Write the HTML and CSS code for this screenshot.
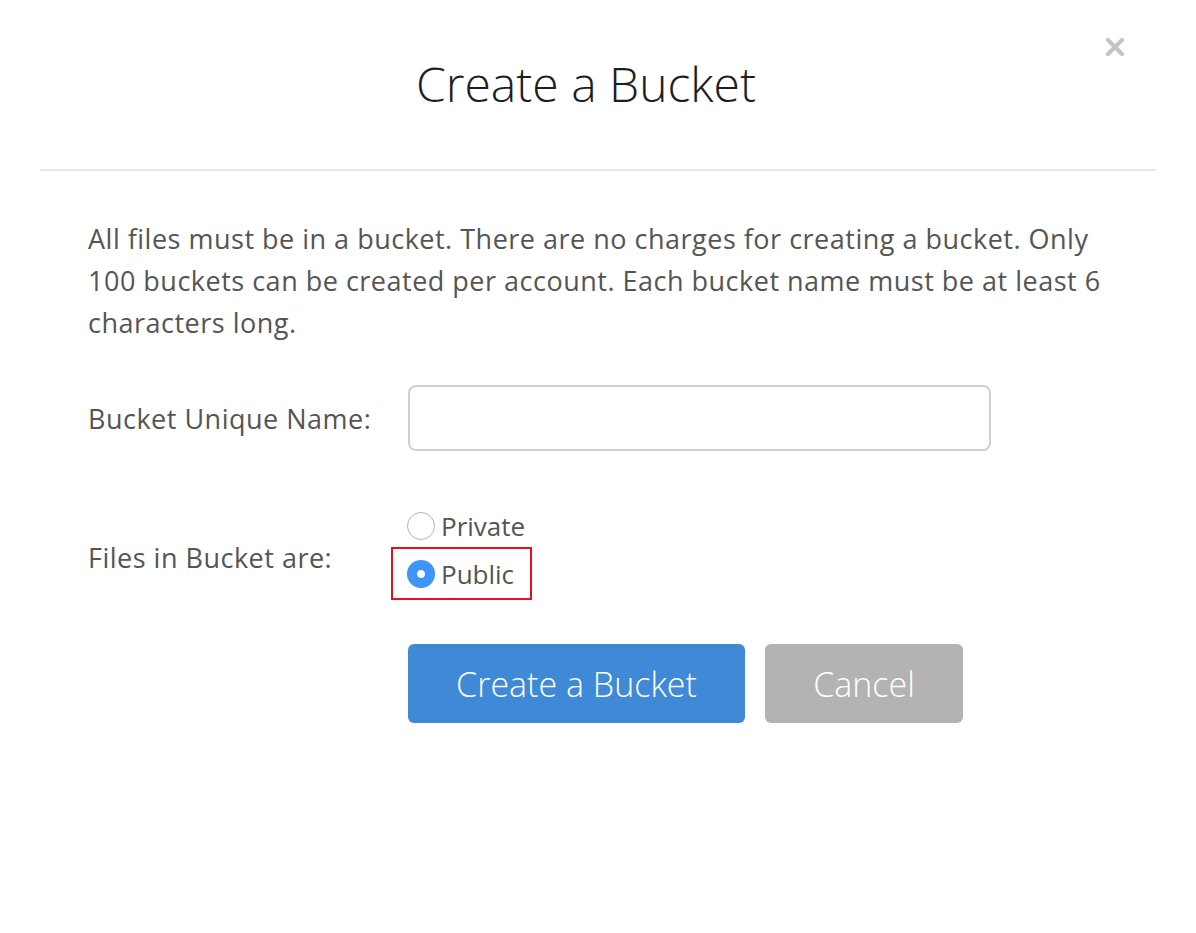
FILE: index.html
```html
<!DOCTYPE html>
<html>
<head>
<meta charset="utf-8">
<link rel="stylesheet" href="styles.css">
</head>
<body>
<div class="modal">
  <div class="modal-header">
    <h1 class="title">Create a Bucket</h1>
    <span class="close"><svg width="20" height="20" viewBox="0 0 20 20"><path d="M3 3 L17 17 M17 3 L3 17" stroke="#c4c4c4" stroke-width="4.2" stroke-linecap="round"/></svg></span>
  </div>
  <div class="modal-body">
    <p class="intro">All files must be in a bucket. There are no charges for creating a bucket. Only 100 buckets can be created per account. Each bucket name must be at least 6 characters long.</p>
    <div class="row name-row">
      <label class="label">Bucket Unique Name:</label>
      <input class="text-input" type="text">
    </div>
    <div class="row files-row">
      <span class="label files-label">Files in Bucket are:</span>
      <div class="radios">
        <label class="radio"><span class="circle"></span>Private</label>
        <label class="radio highlighted"><span class="circle checked"></span>Public</label>
      </div>
    </div>
    <div class="actions">
      <button class="btn primary">Create a Bucket</button>
      <button class="btn secondary">Cancel</button>
    </div>
  </div>
</div>
</body>
</html>
```
FILE: styles.css
```css
html, body {
  margin: 0;
  padding: 0;
  background: #fff;
}
body {
  font-family: "Open Sans", "Liberation Sans", sans-serif;
  color: #555;
}
.modal {
  width: 1196px;
  height: 933px;
  box-sizing: border-box;
}
.modal-header {
  position: relative;
  margin: 0 40px;
  height: 171px;
  border-bottom: 2px solid #e8e8e8;
  box-sizing: border-box;
  display: flex;
  justify-content: center;
  padding-right: 24px;
}
.title {
  margin: 0;
  padding-top: 52px;
  font-size: 48px;
  font-weight: 300;
  line-height: 64px;
  color: #1e1e1e;
}
.close {
  position: absolute;
  right: 31px;
  top: 37px;
  width: 20px;
  height: 20px;
  display: block;
}
.close svg {
  display: block;
}
.modal-body {
  padding: 0 88px;
}
.intro {
  margin: 0;
  padding-top: 47px;
  font-size: 27px;
  letter-spacing: 0.5px;
  line-height: 42px;
  color: #555;
}
.row {
  display: flex;
  align-items: center;
}
.label {
  width: 320px;
  font-size: 27px;
  letter-spacing: 0.5px;
  color: #555;
}
.files-label {
  margin-top: 10px;
}
.name-row {
  margin-top: 41px;
}
.text-input {
  width: 583px;
  height: 66px;
  box-sizing: border-box;
  border: 2px solid #cfcfcf;
  border-radius: 8px;
  outline: none;
  padding: 0 14px;
  font-size: 26px;
  font-family: inherit;
}
.files-row {
  margin-top: 53px;
}
.radios {
  display: flex;
  flex-direction: column;
}
.radio {
  display: flex;
  align-items: center;
  font-size: 26px;
  color: #555;
  height: 43px;
  padding: 0 16px;
  margin-left: -17px;
  box-sizing: border-box;
  width: 141px;
}
.radio.highlighted {
  border: 2px solid #e8101b;
  height: 53px;
  padding-left: 14px;
}
.circle {
  flex-shrink: 0;
  width: 28px;
  height: 28px;
  border-radius: 50%;
  border: 1.5px solid #b4b4b4;
  box-sizing: border-box;
  margin-right: 6px;
  background: #fff;
}
.circle.checked {
  border: none;
  background: radial-gradient(circle, #fff 0 3.5px, #3d95f7 4.5px);
}
.actions {
  display: flex;
  gap: 20px;
  margin-top: 44px;
  padding-left: 320px;
}
.btn {
  height: 79px;
  border: none;
  border-radius: 6px;
  font-family: "Open Sans", "Liberation Sans", sans-serif;
  font-size: 34px;
  font-weight: 300;
  color: #fff;
  padding: 0;
}
.primary {
  width: 337px;
  background: #3f89d6;
}
.secondary {
  width: 198px;
  background: #b3b3b3;
}
```
